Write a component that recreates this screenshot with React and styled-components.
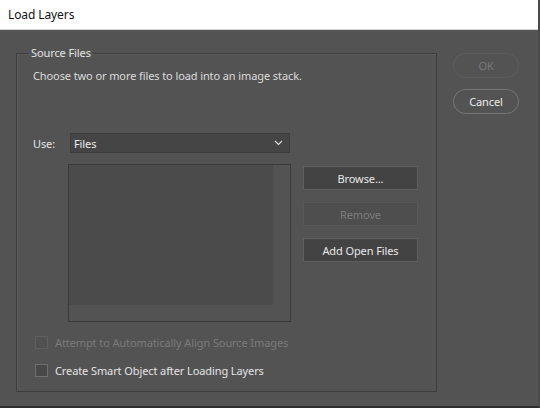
import React from "react";
import styled, { createGlobalStyle } from "styled-components";

const Global = createGlobalStyle`
  html, body { margin: 0; padding: 0; background: #535353; }
  * { box-sizing: border-box; }
`;

const Window = styled.div`
  width: 540px;
  height: 408px;
  display: flex;
  flex-direction: column;
  background: #535353;
  font-family: "Noto Sans", "Liberation Sans", sans-serif;
  font-size: 11px;
  letter-spacing: -0.1px;
  color: #e4e4e4;
  border-bottom: 2px solid #2e2e2e;
  border-right: 2px solid #4a4a4a;
  overflow: hidden;
`;

const TitleBar = styled.div`
  height: 30px;
  flex: none;
  background: #ffffff;
  color: #111;
  font-size: 12px;
  padding-left: 8px;
  display: flex;
  align-items: center;
  border-bottom: 1px solid #d8d8d8;
`;

const Body = styled.div`
  flex: 1;
  display: flex;
  align-items: flex-start;
  padding: 15px 0 0 16px;
  gap: 16px;
`;

const Group = styled.fieldset`
  margin: 0;
  width: 421px;
  height: 347px;
  padding: 0 16px 0 16px;
  border: 1px solid #3d3d3d;
  box-shadow: inset 1px 1px 0 #5c5c5c;
  display: flex;
  flex-direction: column;
`;

const Legend = styled.legend`
  margin-left: -4px;
  padding: 0 2px;
  line-height: 16px;
  color: #e4e4e4;
`;

const Hint = styled.div`
  margin-top: 7px;
  line-height: 16px;
  color: #dcdcdc;
`;

const UseRow = styled.div`
  margin-top: 49px;
  display: flex;
  align-items: center;
`;

const Label = styled.span`
  width: 37px;
`;

const Select = styled.div`
  width: 220px;
  height: 20px;
  background: #454545;
  border: 1px solid #3c3c3c;
  display: flex;
  align-items: center;
  justify-content: space-between;
  padding: 0 6px 0 3px;
  color: #ececec;
`;

const FilesRow = styled.div`
  margin-top: 11px;
  margin-left: 35px;
  display: flex;
  align-items: flex-start;
  gap: 12px;
`;

const FileList = styled.div`
  width: 223px;
  height: 158px;
  border: 1px solid #3a3a3a;
  background: #535353;
  display: grid;
  grid-template-columns: 1fr 17px;
  grid-template-rows: 1fr 16px;
`;

const ListArea = styled.div`
  background: #4b4b4b;
`;

const ButtonColumn = styled.div`
  display: flex;
  flex-direction: column;
  gap: 12px;
  padding-top: 2px;
`;

const Button = styled.button`
  width: 115px;
  height: 24px;
  margin: 0;
  font: inherit;
  letter-spacing: inherit;
  background: ${(p) => (p.disabled ? "#4e4e4e" : "#434343")};
  color: ${(p) => (p.disabled ? "#7c7c7c" : "#e8e8e8")};
  border: 1px solid ${(p) => (p.disabled ? "#585858" : "#5e5e5e")};
  border-radius: 0;
  padding: 0;
`;

const Checks = styled.div`
  margin-top: 14px;
  display: flex;
  flex-direction: column;
  gap: 15px;
`;

const CheckRow = styled.label`
  display: flex;
  align-items: center;
  gap: 7px;
  margin-left: 2px;
  line-height: 13px;
  color: ${(p) => (p.disabled ? "#7a7a7a" : "#e4e4e4")};
`;

const Box = styled.span`
  width: 13px;
  height: 13px;
  border: 1px solid ${(p) => (p.disabled ? "#5f5f5f" : "#707070")};
  background: ${(p) => (p.disabled ? "#505050" : "#484848")};
`;

const SideButtons = styled.div`
  padding-top: 8px;
  display: flex;
  flex-direction: column;
  gap: 11px;
`;

const Pill = styled.button`
  width: 66px;
  height: 25px;
  margin: 0;
  font: inherit;
  letter-spacing: inherit;
  border-radius: 13px;
  background: transparent;
  border: 1px solid ${(p) => (p.disabled ? "#5d5d5d" : "#767676")};
  color: ${(p) => (p.disabled ? "#777" : "#ececec")};
  padding: 0;
`;

const Chevron = () => (
  <svg width="9" height="6" viewBox="0 0 9 6">
    <path d="M1 1l3.5 3.5L8 1" fill="none" stroke="#d8d8d8" strokeWidth="1.2" />
  </svg>
);

export default function App() {
  return (
    <Window>
      <Global />
      <TitleBar>Load Layers</TitleBar>
      <Body>
        <Group>
          <Legend>Source Files</Legend>
          <Hint>Choose two or more files to load into an image stack.</Hint>
          <UseRow>
            <Label>Use:</Label>
            <Select>
              <span>Files</span>
              <Chevron />
            </Select>
          </UseRow>
          <FilesRow>
            <FileList>
              <ListArea />
            </FileList>
            <ButtonColumn>
              <Button>Browse...</Button>
              <Button disabled>Remove</Button>
              <Button>Add Open Files</Button>
            </ButtonColumn>
          </FilesRow>
          <Checks>
            <CheckRow disabled>
              <Box disabled />
              Attempt to Automatically Align Source Images
            </CheckRow>
            <CheckRow>
              <Box />
              Create Smart Object after Loading Layers
            </CheckRow>
          </Checks>
        </Group>
        <SideButtons>
          <Pill disabled>OK</Pill>
          <Pill>Cancel</Pill>
        </SideButtons>
      </Body>
    </Window>
  );
}
